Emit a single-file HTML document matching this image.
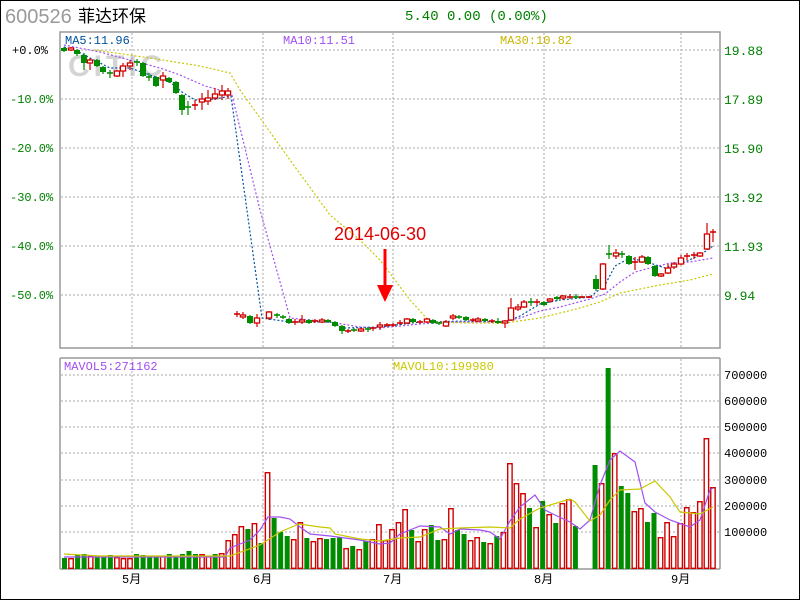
<!DOCTYPE html>
<html><head><meta charset="utf-8"><style>
body{margin:0;background:#fff;}
svg{display:block;font-family:"Liberation Mono","Noto Sans CJK SC",monospace;}
</style></head><body>
<svg id="s" width="800" height="600" xmlns="http://www.w3.org/2000/svg">
<rect x="0.5" y="0.5" width="799" height="599" fill="#fff" stroke="#000"/>
<text x="5" y="23" font-family="Liberation Sans,sans-serif" font-size="20" fill="#999">600526</text>
<text x="78" y="22" font-family="Noto Sans CJK SC,sans-serif" font-size="17" fill="#000">菲达环保</text>
<text x="405" y="20" font-size="14" fill="#008000">5.40 0.00 (0.00%)</text>
<text x="68" y="76" font-family="Liberation Sans,sans-serif" font-weight="bold" font-size="30" letter-spacing="4" fill="#d4d4d4">CITIC</text>
<g id="grid" stroke="#aaa" stroke-dasharray="2,2" stroke-width="1"></g>
<g stroke="#999" stroke-width="1.5" fill="none">
<rect x="60" y="32" width="660" height="316"/>
<line x1="60" y1="358" x2="720" y2="358"/>
<line x1="60" y1="358" x2="60" y2="569"/>
<line x1="720" y1="358" x2="720" y2="569"/>
<line x1="60" y1="569" x2="720" y2="569"/>
</g>
<g font-size="12" fill="#008000">
<text x="12" y="54" fill="#000">+0.0%</text>
<text x="10" y="103">-10.0%</text>
<text x="10" y="152">-20.0%</text>
<text x="10" y="201">-30.0%</text>
<text x="10" y="250">-40.0%</text>
<text x="10" y="299">-50.0%</text>
<text x="724" y="55" font-size="13">19.88</text>
<text x="724" y="104" font-size="13">17.89</text>
<text x="724" y="153" font-size="13">15.90</text>
<text x="724" y="202" font-size="13">13.92</text>
<text x="724" y="251" font-size="13">11.93</text>
<text x="724" y="300" font-size="13">9.94</text>
</g>
<g font-size="12" fill="#000">
<text x="724" y="379">700000</text><text x="724" y="405">600000</text><text x="724" y="431">500000</text>
<text x="724" y="457">400000</text><text x="724" y="484">300000</text><text x="724" y="510">200000</text>
<text x="724" y="536">100000</text>
<text x="122" y="583">5月</text><text x="253" y="583">6月</text><text x="383" y="583">7月</text>
<text x="534" y="583">8月</text><text x="671" y="583">9月</text>
</g>
<text x="65" y="44" font-size="12" fill="#00529c">MA5:11.96</text>
<text x="283" y="44" font-size="12" fill="#a050f0">MA10:11.51</text>
<text x="500" y="44" font-size="12" fill="#c8b400">MA30:10.82</text>
<text x="64" y="370" font-size="12" fill="#a050f0">MAVOL5:271162</text>
<text x="393" y="370" font-size="12" fill="#c8c800">MAVOL10:199980</text>
<g id="vol"></g>
<g id="lines" fill="none"></g>
<g id="cdl"></g>
<text x="334" y="240" font-family="Liberation Sans,sans-serif" font-size="18" fill="#e00000">2014-06-30</text>
<line x1="385" y1="249" x2="385" y2="288" stroke="#f00" stroke-width="3"/>
<polygon points="377,285 393,285 385,302" fill="#f00"/>
</svg>
<script>
var NS="http://www.w3.org/2000/svg";
function el(p,t,a){var e=document.createElementNS(NS,t);for(var k in a)e.setAttribute(k,a[k]);document.getElementById(p).appendChild(e);return e;}
[50,99,148,197,246,295].forEach(function(y){el("grid","line",{x1:61,y1:y,x2:719,y2:y});});
[375,401,427,453,480,506,532].forEach(function(y){el("grid","line",{x1:61,y1:y,x2:719,y2:y});});
[132,263,393,544,681].forEach(function(x){el("grid","line",{x1:x,y1:33,x2:x,y2:347});el("grid","line",{x1:x,y1:359,x2:x,y2:568});});
var V="G558 R558 G555 G554 R556 G556 G556 G555 R557 R558 R558 G554 G555 G556 G556 R556 G554 G556 G554 G551 G554 R554 R556 G554 R553 R540 R534 R526 G529 R523 G543 R472 G518 G532 G536 R539 R522 G538 R541 R538 G539 G538 G537 R548 G546 R549 G541 R539 R524 R540 R529 R522 R509 G530 R541 R529 G525 G540 R539 R508 G530 G534 R540 R537 G542 R543 G536 R532 R463 R483 R493 G508 R527 G501 R514 G523 R503 R499 G526 N N G465 R483 G368 R453 G486 G493 R511 R508 G522 G513 R537 R522 R536 R523 R507 R512 R501 R438 R487".split(" ");
V.forEach(function(v,i){if(v=="N")return;var x=64.5+i*6.55,y=+v.slice(1);
 if(v[0]=="G")el("vol","rect",{x:x-2.5,y:y,width:5,height:569-y,fill:"#008c00"});
 else el("vol","rect",{x:x-2.2,y:y+.7,width:4.4,height:568.3-y-.7,fill:"#fff",stroke:"#d00000","stroke-width":1.4});});
function pl(pts,c,d){el("lines","polyline",{points:pts,stroke:c,"stroke-width":1.2,"stroke-dasharray":d||"none"});}
pl("64,47 77,51 90,58 110,68 130,68 150,75 170,82 182,92 195,100 215,99 231,96 262,318 290,322 330,322 345,328 380,327 420,322 470,321 505,322 520,316 540,304 560,300 590,297 605,285 615,266 630,258 650,263 665,268 685,262 700,255 713,246","#00529c","2,2");
pl("64,45 100,52 130,60 160,68 180,75 205,86 220,90 232,95 260,210 290,318 330,322 360,327 380,328 420,324 450,322 500,322 520,318 540,311 560,307 590,299 605,294 620,282 635,272 650,268 670,263 690,262 713,258","#a050f0","2,2");
pl("95,50 150,58 200,66 230,73 240,90 265,125 290,160 330,215 360,240 380,260 395,280 410,300 430,322 470,323 505,323 540,318 580,308 600,302 620,293 660,285 690,280 713,274","#c8c800","2,2");
pl("64,557 225,557 230,548 250,540 260,530 268,517 280,517 290,519 300,527 310,534 330,536 360,540 380,544 390,543 400,534 420,526 440,527 450,534 460,529 480,530 490,532 500,539 510,521 520,507 535,495 545,510 555,515 570,522 580,529 590,520 600,485 610,460 620,451 635,462 645,503 655,512 670,520 690,527 700,520 710,490 713,488","#a050f0");
pl("64,554 100,556 230,556 260,545 280,532 299,524 320,527 330,528 335,534 360,539 380,541 400,538 420,537 440,529 460,528 490,527 510,528 520,519 540,508 570,499 575,502 590,521 600,515 610,500 620,490 640,489 655,481 670,497 680,512 700,514 713,507","#c8c800");
var C=[[64,48,51,47,52,"g"],[71,48,50,47,51,"r"],[77,50,54,49,56,"g"],[84,55,63,53,70,"g"],[90,60,63,58,70,"r"],[97,60,66,59,67,"g"],[103,67,72,66,74,"g"],[110,73,73,70,78,"g"],[117,71,76,70,77,"r"],[123,66,71,63,77,"r"],[130,63,66,60,70,"r"],[137,62,62,59,66,"g"],[143,63,76,62,77,"g"],[149,77,77,73,81,"g"],[156,77,86,76,87,"g"],[163,76,80,72,88,"r"],[169,78,82,77,83,"g"],[176,82,93,81,94,"g"],[182,95,110,94,115,"g"],[188,107,107,101,115,"g"],[195,105,105,100,110,"r"],[202,99,102,93,110,"r"],[208,98,101,90,105,"r"],[215,94,98,88,100,"r"],[222,91,95,85,100,"r"],[228,91,95,88,99,"r"],
[237,314,314,311,317,"r"],[243,315,317,312,319,"r"],[250,316,323,315,324,"g"],[257,318,323,314,327,"r"],[269,312,318,311,320,"r"],[277,315,315,313,318,"g"],[283,317,317,315,319,"g"],[289,319,323,318,324,"g"],[295,322,322,319,325,"r"],[302,320,322,315,324,"r"],[309,320,323,319,324,"g"],[315,321,321,319,323,"r"],[322,320,322,318,323,"r"],[328,320,322,319,323,"g"],[335,322,326,321,327,"g"],[342,326,331,325,334,"g"],[348,331,331,329,333,"r"],[354,330,330,328,332,"g"],[361,329,331,328,332,"r"],[368,329,329,327,332,"g"],[373,328,329,327,331,"r"],[380,325,327,322,330,"r"],[387,325,325,323,327,"r"],[393,325,325,323,327,"r"],[400,323,323,320,325,"r"],[407,319,323,318,324,"r"],[413,319,322,318,323,"g"],[420,322,322,320,324,"r"],[427,319,322,318,323,"r"],[433,320,323,319,324,"g"],[439,323,324,322,325,"g"],[446,322,326,320,327,"r"],[453,316,318,314,320,"r"],[459,317,317,315,319,"g"],[466,317,320,316,321,"g"],[473,320,320,318,322,"r"],[478,319,321,317,322,"r"],[485,319,321,318,322,"g"],[492,321,321,319,323,"r"],[498,321,323,318,324,"g"],[505,321,323,320,328,"r"],
[511,308,320,298,321,"r"],[518,307,309,304,311,"r"],[524,302,307,300,308,"r"],[531,302,302,298,306,"g"],[537,302,302,299,305,"r"],[544,302,305,301,306,"g"],[550,299,301,298,303,"r"],[557,297,299,296,301,"g"],[563,296,298,295,300,"r"],[570,297,297,294,299,"r"],[576,297,297,294,299,"g"],[582,297,297,296,298,"r"],[589,297,297,296,298,"r"],[596,279,289,275,291,"g"],[603,264,289,263,290,"r"],[609,254,254,245,259,"g"],[616,253,256,249,259,"r"],[622,254,254,251,258,"g"],[629,256,264,255,265,"g"],[635,262,263,257,270,"r"],[642,257,262,255,263,"r"],[648,257,264,256,265,"g"],[655,266,276,265,277,"g"],[661,274,276,273,277,"r"],[668,268,273,264,274,"r"],[674,264,267,262,269,"r"],[681,258,264,255,265,"r"],[687,256,257,253,260,"r"],[694,255,255,252,259,"r"],[700,253,256,252,257,"r"],[707,234,249,223,250,"r"],[713,232,232,229,242,"r"]];
C.forEach(function(c){var x=c[0],col=c[5]=="r"?"#d00000":"#008c00";
 el("cdl","line",{x1:x,y1:c[3],x2:x,y2:c[4],stroke:col,"stroke-width":1.2});
 if(c[2]-c[1]<1.5){el("cdl","line",{x1:x-3,y1:c[1],x2:x+3,y2:c[1],stroke:col,"stroke-width":1.6});}
 else if(c[5]=="g")el("cdl","rect",{x:x-3,y:c[1],width:6,height:c[2]-c[1],fill:col});
 else el("cdl","rect",{x:x-2.6,y:c[1],width:5.2,height:c[2]-c[1],fill:"#fff",stroke:col,"stroke-width":1.3});});
</script>
</body></html>
